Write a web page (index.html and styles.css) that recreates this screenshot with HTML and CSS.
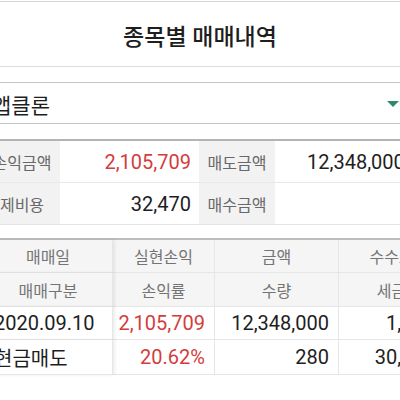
FILE: index.html
```html
<!DOCTYPE html>
<html lang="ko">
<head>
<meta charset="utf-8">
<link rel="stylesheet" href="styles.css">
</head>
<body>
<div class="screen">
  <header class="topbar">
    <h1 class="title">종목별 매매내역</h1>
  </header>

  <div class="select">
    <span class="select-text">앱클론</span>
    <span class="caret"></span>
  </div>

  <div class="summary">
    <div class="s-label">손익금액</div>
    <div class="s-value red">2,105,709</div>
    <div class="s-label">매도금액</div>
    <div class="s-value">12,348,000</div>
    <div class="s-label last">제비용</div>
    <div class="s-value last">32,470</div>
    <div class="s-label last">매수금액</div>
    <div class="s-value last"></div>
  </div>

  <div class="trades">
    <div class="cell head fixed r1">매매일</div>
    <div class="cell head r1">실현손익</div>
    <div class="cell head r1">금액</div>
    <div class="cell head r1">수수료</div>

    <div class="cell head fixed r2">매매구분</div>
    <div class="cell head r2">손익률</div>
    <div class="cell head r2">수량</div>
    <div class="cell head r2">세금</div>

    <div class="cell data fixed left r3">2020.09.10</div>
    <div class="cell data red r3">2,105,709</div>
    <div class="cell data r3">12,348,000</div>
    <div class="cell data r3">1,600</div>

    <div class="cell data fixed left r4">현금매도</div>
    <div class="cell data red r4">20.62%</div>
    <div class="cell data r4">280</div>
    <div class="cell data r4">30,870</div>
  </div>
</div>
</body>
</html>
```

FILE: styles.css
```css
html, body {
  margin: 0;
  padding: 0;
  background: #ffffff;
}

body {
  width: 400px;
  height: 400px;
  overflow: hidden;
  font-family: Roboto, "Noto Sans CJK KR", sans-serif;
  color: #222222;
}

.screen {
  margin-left: -16px;
  width: 432px;
}

.topbar {
  border-top: 1px solid #d6d6d6;
  margin-top: 1px;
  height: 64px;
  border-bottom: 1px solid #dcdcdc;
  display: flex;
  align-items: center;
  justify-content: center;
}

.title {
  margin: 0;
  font-size: 23px;
  font-weight: 500;
  color: #1e1e1e;
  letter-spacing: 0;
  padding-top: 1px;
}

.select {
  margin-top: 15px;
  height: 40px;
  border-top: 1px solid #c4c4c4;
  border-bottom: 1px solid #c4c4c4;
  display: flex;
  align-items: center;
  justify-content: space-between;
  padding: 0 17px 0 8px;
}

.select-text {
  font-size: 21px;
  color: #1e1e1e;
  padding-top: 1px;
}

.caret {
  width: 0;
  height: 0;
  border-left: 6px solid transparent;
  border-right: 6px solid transparent;
  border-top: 6px solid #2b8a6a;
  margin-top: 1px;
}

.summary {
  margin-top: 15px;
  border-top: 2px solid #b4b4b4;
  display: grid;
  grid-template-columns: 76px 139px 76px 141px;
  grid-auto-rows: 42px;
}

.s-label {
  background: #f2f2f2;
  color: #686868;
  font-size: 16px;
  display: flex;
  align-items: center;
  justify-content: center;
  border-bottom: 1px solid #e8e8e8;
}

.s-value {
  font-size: 20px;
  display: flex;
  align-items: center;
  justify-content: flex-end;
  padding-right: 8px;
  border-bottom: 1px solid #e8e8e8;
  color: #1e1e1e;
}

.s-value:nth-child(4) {
  justify-content: flex-start;
  padding-left: 32px;
}

.s-label.last,
.s-value.last {
  border-bottom: 1px solid #e4e4e4;
}

.red {
  color: #d33d3d !important;
}

.trades {
  margin-top: 13px;
  border-top: 2px solid #bdbdbd;
  display: grid;
  grid-template-columns: 129px 102px 124px 106px;
  width: 461px;
}

.cell {
  display: flex;
  align-items: center;
  border-bottom: 1px solid #e6e6e6;
  border-right: 1px solid #e6e6e6;
  box-sizing: border-box;
  white-space: nowrap;
}

.r1 { height: 33px; }
.r2 { height: 34px; }
.r3 { height: 33px; }
.r4 { height: 35px; }

.head {
  background: #f5f5f5;
  color: #747474;
  font-size: 16px;
  justify-content: center;
}

.data {
  background: #ffffff;
  font-size: 20px;
  color: #1e1e1e;
  justify-content: flex-end;
  padding-right: 9px;
}

.data.left {
  justify-content: flex-start;
  padding-left: 10px;
  padding-right: 0;
}

.fixed {
  position: relative;
  box-shadow: 2px 0 3px rgba(0, 0, 0, 0.07);
  z-index: 1;
}
```
